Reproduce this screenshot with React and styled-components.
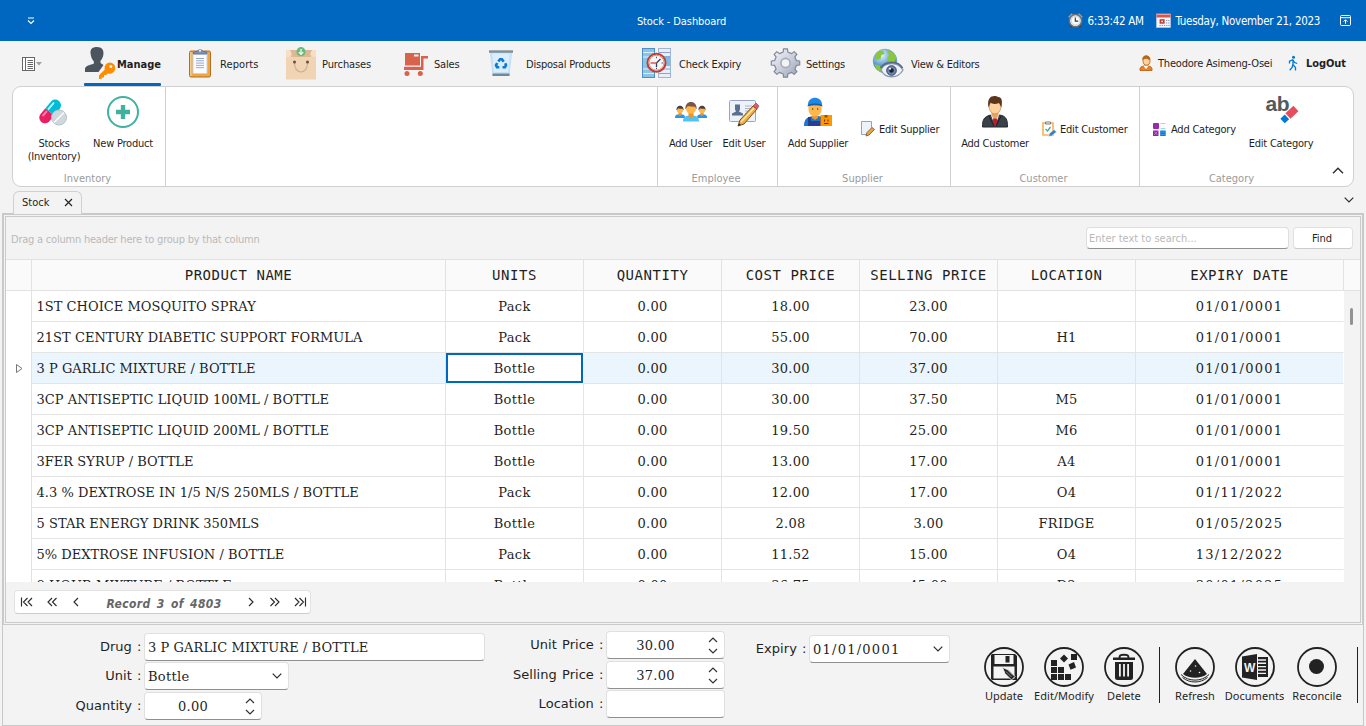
import React from 'react';
import styled, { createGlobalStyle, css } from 'styled-components';

const ui = '"DejaVu Sans Condensed", "DejaVu Sans", sans-serif';
const serif = '"DejaVu Serif", serif';

const Global = createGlobalStyle`
  *, *::before, *::after { box-sizing: border-box; }
  body { margin: 0; background: #f3f3f3; overflow: hidden; }
  svg { display: block; flex: none; overflow: visible; }
`;

const Window = styled.div`
  width: 1366px;
  height: 726px;
  display: flex;
  flex-direction: column;
  background: #f3f3f3;
  color: #1f1f1f;
  font: 11px/14px ${ui};
  white-space: nowrap;
  overflow: hidden;
`;

/* ---------- title bar ---------- */
const TitleBar = styled.header`
  height: 41px;
  flex: none;
  background: #0067c0;
  color: #fff;
  display: grid;
  grid-template-columns: 300px 763px 1fr;
  align-items: center;
`;
const QuickAccess = styled.div`padding-left: 27px;`;
const Title = styled.div`padding-top: 2px; text-align: center; letter-spacing: -0.1px;`;
const Status = styled.div`display: flex; align-items: center; padding-left: 5px;`;
const StatusText = styled.span`
  width: ${p => p.$w}px;
  padding: 1px 0 0 4.5px;
  font-size: 11.5px;
  letter-spacing: ${p => p.$ls}px;
`;

/* ---------- ribbon tabs ---------- */
const TabRow = styled.nav`
  height: 45px;
  flex: none;
  display: flex;
  padding-left: 21px;
`;
const AppMenu = styled.div`width: 63px; display: flex; align-items: center; padding-top: 1px; gap: 1px;`;
const TabItem = styled.div`
  width: ${p => p.$w}px;
  display: flex;
  align-items: center;
  letter-spacing: ${p => p.$ls ?? -0.2}px;
  ${p => p.$bold && css`font-weight: bold;`}
`;
const TabIcon = styled.span`width: ${p => p.$w}px; flex: none; display: block; margin-top: -1px;`;
const TabText = styled.span`padding-top: ${p => p.$pt ?? 2}px;`;
const ActiveTab = styled(TabItem)`
  position: relative;
  &::after {
    content: '';
    position: absolute;
    left: 0;
    bottom: 0;
    width: 77px;
    height: 3px;
    border-radius: 1px;
    background: #0067c0;
  }
`;

/* ---------- ribbon ---------- */
const Ribbon = styled.section`
  margin: 0 12px;
  height: 101px;
  flex: none;
  display: flex;
  background: #fff;
  border: 1px solid #d0d0d0;
  border-radius: 9px;
`;
const Group = styled.div`
  width: ${p => p.$w}px;
  display: flex;
  flex-direction: column;
  border-right: ${p => (p.$last ? 0 : 1)}px solid #d0d0d0;
`;
const GroupBody = styled.div`display: flex; height: 84px; padding-left: ${p => p.$pad}px;`;
const GroupCaption = styled.div`
  padding: 1px ${p => (p.$last ? 0 : 3)}px 0 0;
  text-align: center;
  color: #9b9b9b;
`;
const LargeButton = styled.div`
  width: ${p => p.$w}px;
  display: flex;
  flex-direction: column;
  align-items: center;
  padding-top: 9px;
  text-align: center;
  line-height: 13px;
  letter-spacing: -0.22px;
`;
const LargeIcon = styled.span`height: 41px;`;
const SmallButton = styled.div`
  width: ${p => p.$w}px;
  padding-left: ${p => p.$pad}px;
  display: flex;
  align-items: center;
  letter-spacing: -0.22px;
`;
const SmallIcon = styled.span`width: 18px;`;
const Collapse = styled.div`width: 30px; display: flex; align-items: flex-end; padding: 0 0 12px 9px;`;

/* ---------- document tabs ---------- */
const DocTabs = styled.div`
  height: 26px;
  flex: none;
  display: flex;
  justify-content: space-between;
  padding: 4px 12px 0 13px;
`;
const DocTab = styled.div`
  width: 69px;
  height: 23px;
  display: flex;
  align-items: center;
  justify-content: space-between;
  padding: 0 8px 0 8px;
  border: 1px solid #d0d0d0;
  border-bottom: 0;
  border-radius: 6px 6px 0 0;
  background: #f3f3f3;
  position: relative;
  z-index: 1;
`;
const TabList = styled.div`padding-top: 6px;`;

/* ---------- content ---------- */
const Content = styled.main`
  margin: 0 2px;
  height: 513px;
  flex: none;
  border: 1px solid #c8c8c8;
`;
const GridFrame = styled.section`
  height: 411px;
  border: 3px double #cacaca;
  display: flex;
  flex-direction: column;
`;
const GroupPanel = styled.div`
  height: 42px;
  flex: none;
  display: flex;
  align-items: center;
  padding: 0 7px 0 5px;
  color: #b9b9b9;
`;
const Hint = styled.span`flex: 1; padding-top: 3px; letter-spacing: -0.22px;`;
const SearchBox = styled.div`
  width: 203px;
  height: 22px;
  padding: 4px 2px;
  background: #fff;
  border: 1px solid #dedede;
  border-bottom-color: #909090;
  border-radius: 4px;
  margin-right: 4px;
`;
const FindButton = styled.div`
  width: 60px;
  height: 22px;
  padding: 4px 2px 0 0;
  text-align: center;
  color: #1f1f1f;
  background: #fff;
  border: 1px solid #e0e0e0;
  border-bottom-color: #cccccc;
  border-radius: 4px;
`;

const columns = '26px 414px repeat(5, 138px) 208px 16px';
const HeaderRow = styled.div`
  height: 32px;
  flex: none;
  display: grid;
  grid-template-columns: ${columns};
  background: #fafafa;
  border: solid #e2e2e2;
  border-width: 1px 0;
`;
const HeaderCell = styled.div`
  border-right: ${p => (p.$last ? 0 : 1)}px solid #e2e2e2;
  text-align: center;
  font: 14px/30px "DejaVu Sans Mono", monospace;
  letter-spacing: 0.54px;
`;
const Body = styled.div`position: relative; height: 291px; flex: none; overflow: hidden;`;
const Row = styled.div`
  height: 31px;
  display: grid;
  grid-template-columns: ${columns};
`;
const Indicator = styled.div`
  background: #fff;
  border-right: 1px solid #e2e2e2;
  padding: 10px 0 0 9px;
`;
const Cell = styled.div`
  background: ${p => (p.$selected ? '#ebf5fe' : '#fff')};
  border: solid #e4e4e4;
  border-width: 0 1px 1px 0;
  padding-top: 2px;
  text-align: center;
  font: 13px/28px ${serif};
  letter-spacing: 0.3px;
  ${p => p.$date && css`border-right-color: #fff; letter-spacing: 1.25px;`}
  ${p => p.$name && css`text-align: left; padding-left: 4.5px; letter-spacing: 0.03px;`}
  ${p => p.$focused && css`
    background: #fff;
    outline: 2px solid #0067c0;
    outline-offset: -2px;
    margin: 0 1px 1px 0;
    border-width: 0;
  `}
`;
const Gutter = styled.div`background: #f3f3f3;`;
const Thumb = styled.div`
  position: absolute;
  right: 7px;
  top: 17px;
  width: 3px;
  height: 17px;
  border-radius: 2px;
  background: #929292;
`;
const Pager = styled.div`
  margin: 8px 0 0 8px;
  width: 297px;
  height: 24px;
  padding: 0 0 0 4.5px;
  display: flex;
  align-items: center;
  gap: 14px;
  background: #fff;
  border: 1px solid #e2e2e2;
  border-bottom-color: #cdcdcd;
  border-radius: 4px;
`;
const PagerText = styled.span`
  width: 165px;
  margin: 0 -14px;
  padding: 3px 0 0 2px;
  text-align: center;
  color: #666;
  font: italic bold 12px/18px "DejaVu Sans Condensed", sans-serif;
  letter-spacing: 0.4px;
  word-spacing: 2px;
`;

/* ---------- form ---------- */
const Form = styled.section`display: flex; height: 100px;`;
const FormColumn = styled.div`
  width: ${p => p.$w}px;
  padding-top: ${p => p.$top}px;
  display: flex;
  flex-direction: column;
`;
const Line = styled.div`display: flex; margin-bottom: ${p => p.$gap || 0}px;`;
const Label = styled.label`
  width: ${p => p.$w}px;
  padding-right: 2.5px;
  text-align: right;
  font: 13px/27px "DejaVu Sans", sans-serif;
  letter-spacing: 0.04px;
  word-spacing: 1px;
`;
const Field = styled.div`
  width: ${p => p.$w}px;
  height: 28px;
  display: flex;
  align-items: center;
  justify-content: space-between;
  padding: 0 6px 0 3px;
  background: #fff;
  border: 1px solid #e0e0e0;
  border-bottom-color: #8f8f8f;
  border-radius: 4px;
  font: 13px/24px ${serif};
  letter-spacing: ${p => p.$ls ?? 0.3}px;
`;
const Value = styled.span`
  flex: 1;
  padding-top: 2px;
  ${p => p.$center && css`text-align: center; padding-right: 7px;`}
`;
const Actions = styled.div`display: flex; padding-top: 22px;`;
const Action = styled.div`
  width: ${p => p.$w}px;
  display: flex;
  flex-direction: column;
  align-items: center;
  font: 11px/14px "Noto Sans", sans-serif;
  letter-spacing: 0.05px;
`;
const ActionIcon = styled.span`height: 42px;`;
const Divider = styled.div`width: 1px; height: 56px; margin-left: ${p => p.$ml}px; background: #222;`;

/* ---------- small glyphs ---------- */
const Svg = ({ w, h, box, children, ...rest }) => (
  <svg width={w} height={h} viewBox={box || `0 0 ${w} ${h}`} fill="none" {...rest}>{children}</svg>
);
const Chevron = ({ dir = 'down', w = 10 }) => (
  <Svg w={w} h={w / 2 + 1} box="0 0 10 6" stroke="#2c2c2c" strokeWidth="1.2">
    <path d={dir === 'up' ? 'M.7 5.3 5 1l4.3 4.3' : 'M.7.7 5 5 9.3.7'} />
  </Svg>
);
const Spin = () => (
  <Svg w={10} h={17} stroke="#333" strokeWidth="1.2">
    <path d="M1 5 5 1l4 4M1 12l4 4 4-4" />
  </Svg>
);
const PagerGlyph = ({ d, w = 10 }) => (
  <Svg w={w} h={10} stroke="#2c2c2c" strokeWidth="1.15"><path d={d} /></Svg>
);

/* ---------- title bar icons ---------- */
const QuickIcon = () => (
  <Svg w={8} h={8} stroke="#fff" strokeWidth="1.1"><path d="M1 1h6M1 3.5l3 3 3-3" /></Svg>
);
const AlarmIcon = () => (
  <Svg w={15} h={15}>
    <path d="M2.500 14l2-3M12.500 14l-2-3" stroke="#3c4046" strokeWidth="2" />
    <path d="M1 4.500 4.500 1M14 4.500 10.500 1" stroke="#9aa0a6" strokeWidth="2.200" />
    <circle cx="7.5" cy="7.7" r="6.100" fill="#ecf1f4" stroke="#6c7278" strokeWidth="1.500" />
    <circle cx="7.5" cy="7.7" r="4.300" fill="#f8fbfc" stroke="#b8c0c6" strokeWidth=".6" />
    <path d="M7.3 4.500v3.600h2.900" stroke="#333" strokeWidth="1.1" />
  </Svg>
);
const DateIcon = () => (
  <Svg w={15} h={15}>
    <rect x=".5" y="1" width="14" height="13.5" fill="#f4f4fa" stroke="#c9cfe0" strokeWidth=".6" />
    <path d="M.5.5h14v4H.5z" fill="#d3594d" /><path d="M1 1h13v1H1z" fill="#eda198" />
    <rect x="3.6" y="6.2" width="5" height="4.5" fill="#c53a2f" /><rect x="5.3" y="7.7" width="1.6" height="1.5" fill="#fff" />
    <path d="M10 7.5h3.5M10 10h3.5M3.5 12.5h10" stroke="#8a94b5" strokeWidth="1.2" strokeDasharray="1.2 1" />
  </Svg>
);
const RestoreIcon = () => (
  <Svg w={11} h={11} stroke="#fff"><rect x=".5" y=".5" width="10" height="10" rx="1" /><path d="M.5 2.7h10M5.5 8.8V5M3.6 6.6l1.9-1.9 1.9 1.9" /></Svg>
);

/* ---------- ribbon tab icons ---------- */
const MenuIcon = () => (
  <>
    <Svg w={13} h={14} stroke="#666"><rect x="1.500" y=".5" width="12" height="13" fill="#fff" /><path d="M4.500 1v12M6.500 3.500h5.500M6.500 5.500h5.500M6.500 7.500h5.500M6.500 9.500h5.500M6.500 11.500h5.500" /></Svg>
    <Svg w={6} h={4}><path d="M1 0h6L4 3.4z" fill="#a0a0a0" /></Svg>
  </>
);
const ManageIcon = () => (
  <Svg w={32} h={33}>
    <path d="M13 0c5 0 7 3 6.4 7.500-.4 3-1.700 5-2.900 6.300v2.200l3 2-5 7H1v-3c0-3 4-4 8.800-5.300v-2.500C7.600 12.200 6.800 9 6.500 6 6.200 2 8.500 0 13 0z" fill="#4a555d" />
    <path d="M25.500 15.500a5.600 5.600 0 1 1-1.600 10.900L22 28h-2v2.400h-2.500V32H15v-3.700l5.700-5.500a5.600 5.600 0 0 1 4.800-7.300z" fill="#ff8c00" />
    <circle cx="26.800" cy="19.600" r="1.500" fill="#f3f3f3" />
  </Svg>
);
const ReportsIcon = () => (
  <Svg w={24} h={31}>
    <rect x="1.500" y="3" width="21" height="26" rx="1.500" fill="#eaa848" stroke="#b66d20" />
    <path d="M2.800 4v24" stroke="#ffdf9c" />
    <path d="M5 6h14v19.500H5z" fill="#fbfcff" stroke="#c9d2e4" />
    <path d="M5.500 6V4l4-.5A2.700 2.700 0 0 1 14.700 3.500l4 .5v2z" fill="#8094be" stroke="#566b99" strokeWidth=".8" />
    <circle cx="12" cy="2.600" r="1.100" fill="#f3f3f3" />
    <path d="M8 10.500h8M8 12.800h8M8 15.100h8M8 17.400h8M8 19.700h8" stroke="#9aa8cc" />
  </Svg>
);
const PurchasesIcon = () => (
  <Svg w={32} h={33}>
    <path d="M1 3h30v29.500H1z" fill="#f0d4b4" /><path d="M1 3h4l2 3-3 4H1zM31 3h-4l-2 3 3 4h3z" fill="#f6dfc5" />
    <path d="M5 3h22l-2 4 1 3H6l1-3z" fill="#dcb993" />
    <path d="M9.500 16c0 12 13 12 13 0" stroke="#ceb092" strokeWidth="1.200" />
    <circle cx="9.500" cy="15" r="1.500" fill="#69503a" /><circle cx="22.500" cy="15" r="1.500" fill="#69503a" />
    <circle cx="16" cy="4.700" r="4.600" fill="#69bb7b" /><path d="M16 2v5M13.800 5.100 16 7.300l2.200-2.200" stroke="#fff" strokeWidth="1.200" />
  </Svg>
);
const SalesIcon = () => (
  <Svg w={25} h={24} fill="#d8634c">
    <path fillRule="evenodd" d="M2 2h15v12.500H2zm9 1.500v2h4.500v-2z" />
    <path d="M18 5h7v2.500h-4.500V19H1v-3.300h17z" /><circle cx="4" cy="22.500" r="2.500" /><circle cx="17.300" cy="22.500" r="2.500" />
  </Svg>
);
const DisposalIcon = () => (
  <Svg w={24} h={27}>
    <path d="M.8 2h22.400l-2.700 24h-17z" fill="#c4e1f8" /><path d="M3.200 3.500h17.600L19 22H5z" fill="#dceefc" />
    <path d="M0 .3h24v2.500H0z" fill="#7f9299" /><path d="M3.500 23.500h17V26h-17z" fill="#718b96" />
    <g stroke="#0c79d4" strokeWidth="2.600"><path d="m9.300 11.500 1.800-2.300h1.800l1.800 2.600M16.300 13.200l.7 2-1 2h-2.500M10.300 17.200H8l-1-2 1.200-2.200" /></g>
  </Svg>
);
const ExpiryIcon = () => (
  <Svg w={30} h={30}>
    <rect x="1.500" y=".5" width="12" height="29" fill="#8cc4e5" stroke="#4f8fbf" />
    <rect x="17.500" y=".5" width="12" height="29" fill="#e8effa" stroke="#a1b4d6" />
    <path d="M18 8h11v10H18z" fill="#7dbde4" />
    <path d="M2 4.500h11M2 9h11M2 21h11M2 25.500h11" stroke="#d8f0fb" /><path d="M18 4.500h11M18 9h11M18 21h11M18 25.500h11" stroke="#8da3ca" />
    <circle cx="15.500" cy="14.700" r="9" fill="#f4f7fa" stroke="#be3d35" strokeWidth="2" /><circle cx="15.500" cy="14.700" r="7.500" stroke="#e58a7c" />
    <path d="m15.500 15 4-4M15.500 15v4" stroke="#304052" strokeWidth="1.300" /><path d="M9.500 15h6" stroke="#db403b" strokeWidth="1.300" />
    <path d="M15.500 8.700v1.500M20.500 15H22M15.500 19.700v1.500" stroke="#555" />
  </Svg>
);
const gear = Array.from({ length: 32 }, (_, i) => {
  const slot = i % 4;
  const a = ((Math.floor(i / 4) * 45 + [-12, -8, 8, 12][slot]) * Math.PI) / 180;
  const r = slot === 1 || slot === 2 ? 14.300 : 11.200;
  return `${(15.500 + r * Math.sin(a)).toFixed(1)},${(15 - r * Math.cos(a)).toFixed(1)}`;
}).join(' ');
const SettingsIcon = () => (
  <Svg w={31} h={30}>
    <defs><linearGradient id="steel" x1="0" y1="0" x2="1" y2="1"><stop stopColor="#f5f6fa" /><stop offset=".5" stopColor="#ccd0dc" /><stop offset="1" stopColor="#979eb0" /></linearGradient></defs>
    <polygon points={gear} fill="url(#steel)" stroke="#7f8899" strokeWidth="1.200" strokeLinejoin="round" />
    <circle cx="15.500" cy="15" r="4.600" fill="#f3f3f3" stroke="#a4abbb" strokeWidth="1.600" />
  </Svg>
);
const ViewIcon = () => (
  <Svg w={32} h={31}>
    <defs><radialGradient id="sea" cx=".35" cy=".25"><stop stopColor="#e9f8ff" /><stop offset="1" stopColor="#4a8fca" /></radialGradient></defs>
    <circle cx="13" cy="13" r="11.800" fill="url(#sea)" stroke="#5f9bc8" strokeWidth=".7" />
    <path d="M3.500 6c3-4 6-4 8-3l1 3-3 1-1 4-4 1-2-2zM14.500 2c6 1 9 4 10 8l-3 5-5-1-1-5 2-2zM2.500 16l6 2 1 6c-4-1-6-4-7-8z" fill="#8cc63f" />
    <path d="M9 22c3-8 17-9 22 0-5 9-18 9-22 0z" fill="#eef2f8" stroke="#8797b2" strokeWidth="1.300" />
    <path d="M8.500 20c5-7 17-8 22 0" stroke="#586b8b" strokeWidth="1.800" />
    <circle cx="19.500" cy="22.500" r="4.800" fill="#7085a8" stroke="#344766" /><circle cx="19.500" cy="22.500" r="2.300" fill="#15243a" /><circle cx="18" cy="20.800" r="1" fill="#fff" />
  </Svg>
);
const UserIcon = () => (
  <Svg w={14} h={16}>
    <path d="M1 15.500c-.5-3 1-4 4-4.500h4c3 .5 4.500 1.500 4 4.500z" fill="#e98225" stroke="#b55912" strokeWidth=".8" />
    <path d="m4.500 11 2.500 3 2.500-3" fill="#fff" /><ellipse cx="7.500" cy="5.500" rx="3.500" ry="4.600" fill="#ffd39b" stroke="#c97521" />
    <path d="M3.500 5C2.500 0 9-1 11 3l-.3 2.500C8.500 3 6 3.500 4.500 4.500z" fill="#b5661a" />
  </Svg>
);
const WalkIcon = () => (
  <Svg w={12} h={16} stroke="#0079d4" strokeWidth="1.300">
    <circle cx="5.500" cy="2.200" r="1.500" fill="#0079d4" stroke="none" /><path d="M1.500 8.500V6.200l3.300-1.500 1.800 2.800 2.600 1M5 4.700v5l2.500 2.800v3M4.900 9.500l-.8 3-2.400 2.700" />
  </Svg>
);

/* ---------- ribbon button icons ---------- */
const PillsIcon = () => (
  <Svg w={32} h={32}>
    <g transform="rotate(40 12 16)">
      <path d="M6 16h11.500v7.500a5.750 5.750 0 0 1-11.500 0z" fill="#e91e63" />
      <path d="M6 16V7.500a5.750 5.750 0 0 1 11.500 0V16z" fill="#00bcd4" />
      <path d="M9 7v7.500" stroke="#b2f0f6" strokeWidth="2" strokeLinecap="round" />
      <path d="M9 18v5" stroke="#ff83ae" strokeWidth="2" strokeLinecap="round" />
    </g>
    <circle cx="21" cy="21.500" r="7.500" fill="#cfd8dc" stroke="#b7c1c6" /><path d="m16 26.500 10-10" stroke="#fff" strokeWidth="1.200" />
  </Svg>
);
const PlusIcon = () => (
  <Svg w={32} h={32}><circle cx="16" cy="16" r="15" stroke="#3fb1a0" strokeWidth="2" /><path d="M16 9v14M9 16h14" stroke="#3fb1a0" strokeWidth="4.300" /></Svg>
);
const Person = ({ x, y, s = 1, hair, coat }) => (
  <g transform={`translate(${x} ${y}) scale(${s})`}>
    <path d="M0 20c0-5 3-6 8-6s8 1 8 6z" fill={coat} /><path d="M5.500 11h5v4L8 17l-2.500-2z" fill="#ee9423" />
    <circle cx="8" cy="7.300" r="5" fill="#ffb74d" /><path d="M2.500 8C1-2 15-2 13.500 8L12 5C9 6 7 4 4.300 5z" fill={hair} />
  </g>
);
const UsersIcon = () => (
  <Svg w={32} h={32}><Person x={0} y={9.500} s={.63} hair="#424242" coat="#2196f3" /><Person x={22} y={9.500} s={.63} hair="#424242" coat="#2196f3" /><Person x={8} y={5.500} s={1} hair="#795548" coat="#4fc3f7" /></Svg>
);
const Pencil = () => (
  <g>
    <path d="m10 30 2-6L25 10l4 3-13 15z" fill="#efae45" stroke="#7b502c" /><path d="m13 26 13-14" stroke="#fff1a5" strokeWidth="1.200" />
    <path d="m25 10 3-3 3 3-2 3z" fill="#d95d66" stroke="#9d4651" strokeWidth=".7" /><path d="m10 30 1-3 2 2z" fill="#333" />
  </g>
);
const EditUserIcon = () => (
  <Svg w={32} h={32}>
    <rect x="1.500" y="4.500" width="26" height="21" rx="1" fill="#edf1fa" stroke="#96a5ca" />
    <path d="M7 8.500h5v5l-1 2 4 2v2H4v-2l4-2-1-2z" fill="#5b6f8f" /><path d="M17 10h7M17 12.500h6M17 15h4M17 17.500h2" stroke="#a8b3cc" /><Pencil />
  </Svg>
);
const SupplierIcon = () => (
  <Svg w={32} h={32}>
    <path d="M2 30c0-7 3-9 9-10h4c4 0 7 1 9 4v6z" fill="#1976d2" /><path d="M6 21h3v4h9v-4h3v9H6z" fill="#263f8f" />
    <path d="M10 17h6v5l-3 2-3-2z" fill="#ee9423" /><path d="M6.500 9h13v5a6.500 6.500 0 0 1-13 0z" fill="#ffb74d" />
    <path d="M6 8.500c0-9 14-9 14 0l.5 2c-4-1.200-10.500-1.200-15 0z" fill="#1e88e5" /><path d="M6 9.500c4-1.500 10-1.500 14 0" stroke="#1258a5" strokeWidth="1.300" />
    <path d="M10 13h1.200M15 13h1.200" stroke="#784719" strokeWidth="1.500" />
    <rect x="18.500" y="19" width="11.500" height="11" fill="#ff9800" /><path d="M22.500 19h3v2.500h-3z" fill="#9d5000" /><path d="M22 27.500h4.500" stroke="#573600" /><path d="M22.500 23.500v2M26 23.500v2" stroke="#573600" />
  </Svg>
);
const CustomerIcon = () => (
  <Svg w={32} h={32}>
    <path d="M3.500 31c0-7 1-10 8-12h9c7 1 8 5 8 12z" fill="#3b4149" stroke="#222830" />
    <path d="m11.500 18 4.500 12 4.500-12z" fill="#eef2f8" /><path d="m15 21-1.500 4 2.500 6 2.500-6-1.500-4z" fill="#bd1d2a" />
    <path d="M12.500 14h7v6L16 23l-3.500-3z" fill="#e8a562" /><ellipse cx="16" cy="11" rx="5.800" ry="7" fill="#ffd19d" stroke="#b37a45" strokeWidth=".6" />
    <path d="M9.500 11.500C7-1 16-1 19 1c5 0 4 6 3.500 10.500L20 7c-3 1-6.500 1.500-8.500-.5z" fill="#5b351c" />
    <path d="m10 20 5 10M22 20l-5 10" stroke="#181d23" />
  </Svg>
);
const EraseText = styled.text`font: bold 21px "Liberation Sans", sans-serif; fill: #505a61; letter-spacing: -0.5px;`;
const EditCategoryIcon = () => (
  <Svg w={32} h={32}>
    <EraseText x="0.500" y="14.800">ab</EraseText>
    <g transform="translate(24.500 18.500) rotate(-43)"><path d="M-8.500-3.400h17v7h-17z" fill="#fff" /><path d="M-9.500-3.200h6v6.400h-6z" fill="#0078d7" /><path d="M-2.200-3.700H8.800v7.400h-11z" fill="#e84b5a" /></g>
  </Svg>
);
const NoteIcon = () => (
  <Svg w={15} h={16}><path d="M.5.5h10v10l-3 3h-7z" fill="#eef3fb" stroke="#8da3c8" /><path d="m5 15 1-3.500 5-5 2.500 2-5.500 5.500z" fill="#eaa340" stroke="#76502d" strokeWidth=".8" /></Svg>
);
const ClipIcon = () => (
  <Svg w={15} h={16}><path d="M1 2h10v12H1z" fill="#fff" stroke="#f2b85e" strokeWidth="1.700" /><path d="M3.500 3V1h5v2z" fill="#fff" stroke="#777" /><path d="m3.500 8 2 2 3-4" stroke="#4cad8d" strokeWidth="1.300" /><path d="m6.500 15.500 1-3 4.500-4 2.500 2.500-5 4z" fill="#397fc1" stroke="#fff" strokeWidth=".5" /></Svg>
);
const CategoryIcon = () => (
  <Svg w={13} h={13}><rect width="6" height="6" rx="1" fill="#9c27b0" /><rect y="7.500" width="5.500" height="5.500" fill="#8e24aa" /><path d="m1 8.500 3.500 3.500M4.500 8.500 1 12" stroke="#cb88d8" strokeWidth=".8" /><path d="M7.500.5h5M7.500 5.500h5" stroke="#9ed8f2" /><rect x="7.200" y="7.500" width="5.500" height="5.500" fill="#087bd0" /><path d="M8.500 9h3M8.500 11.500h3" stroke="#67baf0" strokeDasharray="1 1" /></Svg>
);

/* ---------- form action icons ---------- */
const Ring = ({ children }) => (
  <Svg w={40} h={40}><circle cx="20" cy="20" r="19" stroke="#222" strokeWidth="1.800" />{children}</Svg>
);
const ink = '#222';
const UpdateIcon = () => (
  <Ring>
    <path fillRule="evenodd" d="M8 7h23l2 2v24H8L7 32V8zm2.500 1v9h19V8zm-1 11.500v12h21v-12z" fill={ink} />
    <rect x="21.500" y="9" width="4" height="6.500" fill={ink} />
    <path d="m18.500 20.500 6 2.500 6.500 6.500-3.500 3.500-6.500-6.500z" fill={ink} stroke="#f3f3f3" strokeWidth=".8" /><path d="m22 24.500 5.500 5.500M24 23.500l5 5" stroke="#f3f3f3" strokeWidth=".5" />
  </Ring>
);
const ModifyIcon = () => (
  <Ring><g fill={ink}>
    <path d="M7 13h6v6H7zM7 20h6v6H7zM7 27h6v6H7zM14 20h6v6h-6zM14 27h6v6h-6zM21 27h6v6h-6zM27 7h6v6h-6z" />
    <path d="m20 7.500 4 4-4 4-4-4zM24.500 17.500l5.500-2.500 2 5.500-5.500 2.300z" />
  </g></Ring>
);
const DeleteIcon = () => (
  <Ring>
    <path fillRule="evenodd" d="M11 15h18v15.500a2.500 2.500 0 0 1-2.500 2.500h-13a2.500 2.500 0 0 1-2.500-2.500zm4 2v12.500h1.800V17zm4.100 0v12.500h1.800V17zm4.100 0v12.500H25V17z" fill={ink} />
    <path d="M9 10.500h22V13H9z" fill={ink} /><path d="M15.500 11c0-3 1-3.300 4.500-3.300s4.500.3 4.500 3.300" stroke={ink} strokeWidth="2" />
  </Ring>
);
const RefreshIcon = () => (
  <Ring>
    <path d="m20 12 12 15c-6 5-18 5-24 0z" fill={ink} /><g fill="#f3f3f3"><circle cx="20.500" cy="19" r=".8" /><circle cx="15.500" cy="24" r=".8" /><circle cx="24.500" cy="25.500" r=".8" /></g>
    <path d="M6 27.500c7 7.500 21 7.500 28 0M7.500 30.500c7 6 18 6 25 0" stroke={ink} strokeWidth="1" />
  </Ring>
);
const WordMark = styled.text`font: bold 12px "Liberation Sans", sans-serif; fill: #f3f3f3; letter-spacing: 0;`;
const WordIcon = () => (
  <Ring>
    <path d="M7 9.500 22 7v26L7 30.500z" fill={ink} /><path d="M23 10h10v20H23z" fill={ink} />
    <path d="M23 13h8M23 16.300h8M23 19.600h8M23 23h8M23 26.400h8" stroke="#f3f3f3" strokeWidth="1.400" /><WordMark x="8.900" y="24.500">W</WordMark>
  </Ring>
);
const ReconcileIcon = () => <Ring><circle cx="19.500" cy="19.500" r="7.500" fill={ink} /></Ring>;

/* ---------- data ---------- */
const tabs = [
  ['Reports', 97, 32, <ReportsIcon />, 0.1], ['Purchases', 118, 37, <PurchasesIcon />, -0.1],
  ['Sales', 86, 31, <SalesIcon />], ['Disposal Products', 152, 37, <DisposalIcon />],
  ['Check Expiry', 129, 38, <ExpiryIcon />], ['Settings', 102, 36, <SettingsIcon />],
  ['View & Editors', 267, 39, <ViewIcon />, -0.25],
];
const rows = [
  ['1ST CHOICE MOSQUITO SPRAY', 'Pack', '0.00', '18.00', '23.00', '', '01/01/0001'],
  ['21ST CENTURY DIABETIC SUPPORT FORMULA', 'Pack', '0.00', '55.00', '70.00', 'H1', '01/01/0001'],
  ['3 P GARLIC MIXTURE / BOTTLE', 'Bottle', '0.00', '30.00', '37.00', '', '01/01/0001'],
  ['3CP ANTISEPTIC LIQUID 100ML / BOTTLE', 'Bottle', '0.00', '30.00', '37.50', 'M5', '01/01/0001'],
  ['3CP ANTISEPTIC LIQUID 200ML / BOTTLE', 'Bottle', '0.00', '19.50', '25.00', 'M6', '01/01/0001'],
  ['3FER SYRUP / BOTTLE', 'Bottle', '0.00', '13.00', '17.00', 'A4', '01/01/0001'],
  ['4.3 % DEXTROSE IN 1/5 N/S 250MLS / BOTTLE', 'Pack', '0.00', '12.00', '17.00', 'O4', '01/11/2022'],
  ['5 STAR ENERGY DRINK 350MLS', 'Bottle', '0.00', '2.08', '3.00', 'FRIDGE', '01/05/2025'],
  ['5% DEXTROSE INFUSION / BOTTLE', 'Pack', '0.00', '11.52', '15.00', 'O4', '13/12/2022'],
  ['8 HOUR MIXTURE / BOTTLE', 'Bottle', '0.00', '36.75', '45.00', 'D2', '30/01/2025'],
];
const heads = ['', 'PRODUCT NAME', 'UNITS', 'QUANTITY', 'COST PRICE', 'SELLING PRICE', 'LOCATION', 'EXPIRY DATE', ''];
const selected = 2;

const Large = ({ w, icon, children }) => (
  <LargeButton $w={w}><LargeIcon>{icon}</LargeIcon>{children}</LargeButton>
);
const Small = ({ w, pad, icon, children }) => (
  <SmallButton $w={w} $pad={pad}><SmallIcon>{icon}</SmallIcon><TabText $pt={1}>{children}</TabText></SmallButton>
);
const RibbonGroup = ({ w, pad, caption, last, children }) => (
  <Group $w={w} $last={last}><GroupBody $pad={pad}>{children}</GroupBody><GroupCaption $last={last}>{caption}</GroupCaption></Group>
);

export default function App() {
  return (
    <Window>
      <Global />
      <TitleBar>
        <QuickAccess><QuickIcon /></QuickAccess>
        <Title>Stock - Dashboard</Title>
        <Status>
          <AlarmIcon /><StatusText $w={73} $ls={-0.3}>6:33:42 AM</StatusText>
          <DateIcon /><StatusText $w={169} $ls={-0.27}>Tuesday, November 21, 2023</StatusText>
          <RestoreIcon />
        </Status>
      </TitleBar>

      <TabRow>
        <AppMenu><MenuIcon /></AppMenu>
        <ActiveTab $w={104} $bold $ls={0}><TabIcon $w={33}><ManageIcon /></TabIcon><TabText>Manage</TabText></ActiveTab>
        {tabs.map(([name, w, iw, icon, ls]) => (
          <TabItem key={name} $w={w} $ls={ls}><TabIcon $w={iw}>{icon}</TabIcon><TabText>{name}</TabText></TabItem>
        ))}
        <TabItem $w={149}><TabIcon $w={19}><UserIcon /></TabIcon><TabText $pt={0}>Theodore Asimeng-Osei</TabText></TabItem>
        <TabItem $w={60} $bold $ls={-0.1}><TabIcon $w={18}><WalkIcon /></TabIcon><TabText $pt={0}>LogOut</TabText></TabItem>
      </TabRow>

      <Ribbon>
        <RibbonGroup w={153} pad={6} caption="Inventory">
          <Large w={70} icon={<PillsIcon />}>Stocks<br />(Inventory)</Large>
          <Large w={68} icon={<PlusIcon />}>New Product</Large>
        </RibbonGroup>
        <Group $w={492} />
        <RibbonGroup w={120} pad={6} caption="Employee">
          <Large w={53} icon={<UsersIcon />}>Add User</Large>
          <Large w={54} icon={<EditUserIcon />}>Edit User</Large>
        </RibbonGroup>
        <RibbonGroup w={173} pad={6} caption="Supplier">
          <Large w={68} icon={<SupplierIcon />}>Add Supplier</Large>
          <Small pad={9} icon={<NoteIcon />}>Edit Supplier</Small>
        </RibbonGroup>
        <RibbonGroup w={189} pad={6} caption="Customer">
          <Large w={76} icon={<CustomerIcon />}>Add Customer</Large>
          <Small pad={9} icon={<ClipIcon />}>Edit Customer</Small>
        </RibbonGroup>
        <RibbonGroup w={183} pad={13} caption="Category" last>
          <Small w={94} pad={0} icon={<CategoryIcon />}>Add Category</Small>
          <Large w={68} icon={<EditCategoryIcon />}>Edit Category</Large>
        </RibbonGroup>
        <Collapse><Chevron dir="up" w={12} /></Collapse>
      </Ribbon>

      <DocTabs>
        <DocTab>
          Stock
          <Svg w={9} h={9} stroke="#222" strokeWidth="1.150"><path d="m1 0 7 7M8 0 1 7" /></Svg>
        </DocTab>
        <TabList><Chevron w={10} /></TabList>
      </DocTabs>

      <Content>
        <GridFrame>
          <GroupPanel>
            <Hint>Drag a column header here to group by that column</Hint>
            <SearchBox>Enter text to search...</SearchBox>
            <FindButton>Find</FindButton>
          </GroupPanel>
          <HeaderRow>
            {heads.map((h, i) => <HeaderCell key={i} $last={i === 8}>{h}</HeaderCell>)}
          </HeaderRow>
          <Body>
            {rows.map((r, ri) => (
              <Row key={ri}>
                <Indicator>
                  {ri === selected && <Svg w={8} h={11} stroke="#777"><path d="M1.500 1.500v8L7 5.500z" /></Svg>}
                </Indicator>
                {r.map((v, ci) => (
                  <Cell key={ci} $name={ci === 0} $date={ci === 6} $selected={ri === selected} $focused={ri === selected && ci === 1}>{v}</Cell>
                ))}
                <Gutter />
              </Row>
            ))}
            <Thumb />
          </Body>
          <Pager>
            <PagerGlyph w={13} d="M1.500.5v9M7.500 1l-4 4 4 4M12 1 8 5l4 4" />
            <PagerGlyph d="M5 1 1 5l4 4M9.500 1l-4 4 4 4" />
            <PagerGlyph d="M7 1 3 5l4 4" />
            <PagerText>Record 3 of 4803</PagerText>
            <PagerGlyph d="m3 1 4 4-4 4" />
            <PagerGlyph d="m.500 1 4 4-4 4M5 1l4 4-4 4" />
            <PagerGlyph w={13} d="m1 1 4 4-4 4M5.500 1l4 4-4 4M11.500.5v9" />
          </Pager>
        </GridFrame>

        <Form>
          <FormColumn $w={482} $top={8}>
            <Line $gap={1}><Label $w={141}>Drug :</Label><Field $w={341} $ls={0.08}><Value>3 P GARLIC MIXTURE / BOTTLE</Value></Field></Line>
            <Line $gap={2}><Label $w={141}>Unit :</Label><Field $w={145}><Value>Bottle</Value><Chevron w={10} /></Field></Line>
            <Line><Label $w={141}>Quantity :</Label><Field $w={118}><Value $center>0.00</Value><Spin /></Field></Line>
          </FormColumn>
          <FormColumn $w={240} $top={6}>
            <Line $gap={2}><Label $w={121}>Unit Price :</Label><Field $w={119}><Value $center>30.00</Value><Spin /></Field></Line>
            <Line $gap={1}><Label $w={121}>Selling Price :</Label><Field $w={119}><Value $center>37.00</Value><Spin /></Field></Line>
            <Line><Label $w={121}>Location :</Label><Field $w={119} /></Line>
          </FormColumn>
          <FormColumn $w={249} $top={10}>
            <Line><Label $w={84}>Expiry :</Label><Field $w={141} $ls={1.25}><Value>01/01/0001</Value><Chevron w={10} /></Field></Line>
          </FormColumn>
          <Actions>
            <Action $w={60}><ActionIcon><UpdateIcon /></ActionIcon>Update</Action>
            <Action $w={60}><ActionIcon><ModifyIcon /></ActionIcon>Edit/Modify</Action>
            <Action $w={60}><ActionIcon><DeleteIcon /></ActionIcon>Delete</Action>
            <Divider $ml={5} />
            <Action $w={70}><ActionIcon><RefreshIcon /></ActionIcon>Refresh</Action>
            <Action $w={49}><ActionIcon><WordIcon /></ActionIcon>Documents</Action>
            <Action $w={76}><ActionIcon><ReconcileIcon /></ActionIcon>Reconcile</Action>
            <Divider $ml={2} />
          </Actions>
        </Form>
      </Content>
    </Window>
  );
}
